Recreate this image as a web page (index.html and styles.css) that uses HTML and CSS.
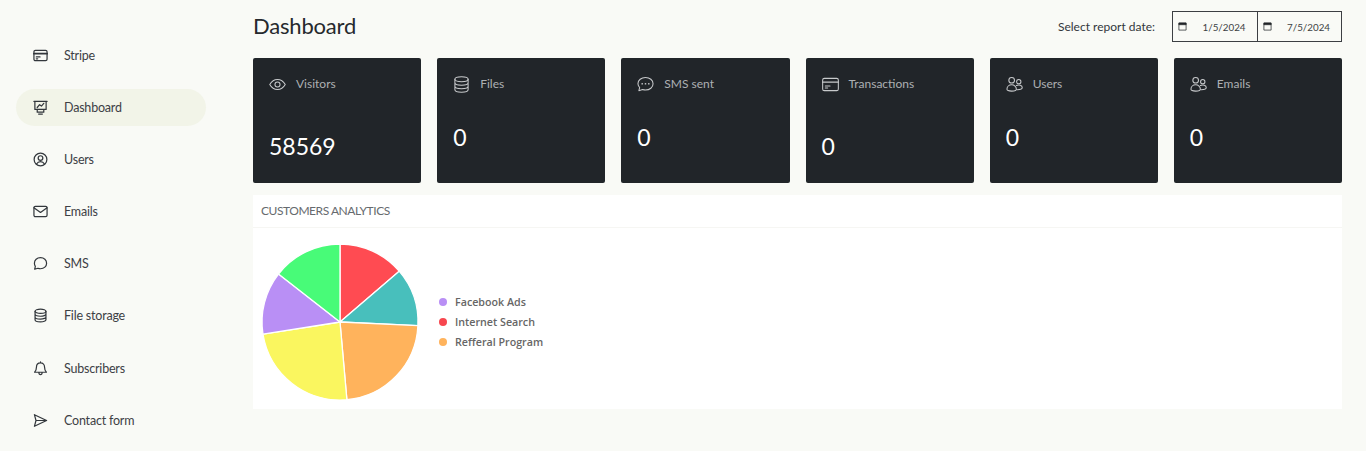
FILE: index.html
```html
<!DOCTYPE html>
<html lang="en">
<head>
<meta charset="utf-8">
<title>Dashboard</title>
<link rel="stylesheet" href="styles.css">
</head>
<body>
<div class="app">
  <nav class="sidebar">
    <a class="nav-item"><svg class="nav-icon" viewBox="0 0 16 16"><rect x="1" y="2.500" width="14" height="11" rx="1.500"/><path d="M1 6h14" stroke-width="2"/><path d="M3.500 9.500h4M3.500 11.500h1.500"/></svg><span>Stripe</span></a>
    <a class="nav-item active"><svg class="nav-icon" viewBox="0 0 16 16"><path d="M1 1.500h14M2 1.500v8.500h12V1.500M4.500 10v3h7v-3M6 15h4M4.500 8l2.500-3 2 1.500 2.500-3"/></svg><span>Dashboard</span></a>
    <a class="nav-item"><svg class="nav-icon" viewBox="0 0 16 16"><circle cx="8" cy="8" r="6.800"/><circle cx="8" cy="6.500" r="2.500"/><path d="M3.800 12.800c1-1.800 2.500-2.500 4.200-2.500s3.200.7 4.200 2.500"/></svg><span>Users</span></a>
    <a class="nav-item"><svg class="nav-icon" viewBox="0 0 16 16"><rect x="1" y="2.500" width="14" height="11" rx="1.500"/><path d="M1 4l7 5 7-5"/></svg><span>Emails</span></a>
    <a class="nav-item"><svg class="nav-icon" viewBox="0 0 16 16"><path d="M8 1.800c3.800 0 6.500 2.600 6.500 5.900s-2.700 5.900-6.500 5.900c-1 0-2-.2-2.800-.5l-3.400 1 .7-3C1.900 10.200 1.500 9 1.500 7.700 1.500 4.400 4.200 1.800 8 1.800z"/></svg><span>SMS</span></a>
    <a class="nav-item"><svg class="nav-icon" viewBox="0 0 16 16"><ellipse cx="8" cy="3.500" rx="5.800" ry="2.300"/><path d="M2.200 3.500v9c0 1.300 2.600 2.300 5.800 2.300s5.800-1 5.800-2.300v-9M2.200 6.500c0 1.300 2.600 2.300 5.800 2.300s5.800-1 5.800-2.300M2.200 9.500c0 1.300 2.600 2.300 5.800 2.300s5.800-1 5.800-2.300"/></svg><span>File storage</span></a>
    <a class="nav-item"><svg class="nav-icon" viewBox="0 0 16 16"><path d="M8 2c-2.700 0-4.300 2-4.300 4.500 0 3-1 4.500-2 5.500h12.600c-1-1-2-2.500-2-5.500C12.300 4 10.700 2 8 2zM8 .8V2M6.300 12.200c0 1.300.8 2.300 1.700 2.300s1.700-1 1.700-2.300"/></svg><span>Subscribers</span></a>
    <a class="nav-item"><svg class="nav-icon" viewBox="0 0 16 16"><path d="M1.500 1.800l13 6.200-13 6.200L3.200 8zM3.200 8h11.300"/></svg><span>Contact form</span></a>
  </nav>

  <main class="content">
    <header class="topbar">
      <h1 class="title">Dashboard</h1>
      <div class="date-picker">
        <span class="date-label">Select report date:</span>
        <div class="date-range">
          <div class="date-field"><svg class="cal" viewBox="0 0 10 10"><path d="M1 1.500h8v7.500H1z"/><path class="cal-top" d="M1 1h8v2H1z"/></svg><span>1/5/2024</span></div>
          <div class="date-field"><svg class="cal" viewBox="0 0 10 10"><path d="M1 1.500h8v7.500H1z"/><path class="cal-top" d="M1 1h8v2H1z"/></svg><span>7/5/2024</span></div>
        </div>
      </div>
    </header>

    <section class="cards">
      <article class="card">
        <div class="card-head"><svg class="card-icon" viewBox="0 0 18 18"><path d="M.8 9C2.800 5.500 5.600 3.700 9 3.700s6.200 1.800 8.200 5.300c-2 3.500-4.800 5.300-8.200 5.300S2.800 12.500.8 9z"/><circle cx="9" cy="9" r="2.700"/></svg><span>Visitors</span></div>
        <div class="card-value low">58569</div>
      </article>
      <article class="card">
        <div class="card-head"><svg class="card-icon" viewBox="0 0 18 18"><ellipse cx="9" cy="3.500" rx="7" ry="2.600"/><path d="M2 3.500v11c0 1.500 3.100 2.600 7 2.600s7-1.100 7-2.600v-11M2 7.200c0 1.500 3.100 2.600 7 2.600s7-1.100 7-2.600M2 10.900c0 1.500 3.100 2.600 7 2.600s7-1.100 7-2.600"/></svg><span>Files</span></div>
        <div class="card-value">0</div>
      </article>
      <article class="card">
        <div class="card-head"><svg class="card-icon" viewBox="0 0 18 18"><path d="M9 1.500c4.500 0 8 2.900 8 6.700s-3.500 6.700-8 6.700c-1.100 0-2.200-.2-3.100-.5l-3.900 1.100.8-3.300C1.800 11 1 9.700 1 8.200 1 4.400 4.500 1.500 9 1.500z"/><path class="dots" d="M5.500 8.200h.01M9 8.200h.01M12.500 8.200h.01"/></svg><span>SMS sent</span></div>
        <div class="card-value">0</div>
      </article>
      <article class="card">
        <div class="card-head"><svg class="card-icon" viewBox="0 0 18 18"><rect x=".7" y="2.500" width="16.600" height="13" rx="1.800"/><path d="M.7 6.500h16.600" stroke-width="1.500"/><path d="M3.500 10.500h5M3.500 12.700h2.500"/></svg><span>Transactions</span></div>
        <div class="card-value low">0</div>
      </article>
      <article class="card">
        <div class="card-head"><svg class="card-icon" viewBox="0 0 18 18"><circle cx="6" cy="4.500" r="3"/><circle cx="13.500" cy="6" r="2.300"/><path d="M1 14c0-2.800 2.200-4.700 5-4.700s5 1.900 5 4.700c0 1.200-1.500 2-5 2s-5-.8-5-2zM11 10c2.800-1.200 6.200-.4 6.200 2.200 0 1.500-1.500 2.300-5.200 2.300"/></svg><span>Users</span></div>
        <div class="card-value">0</div>
      </article>
      <article class="card">
        <div class="card-head"><svg class="card-icon" viewBox="0 0 18 18"><circle cx="6" cy="4.500" r="3"/><circle cx="13.500" cy="6" r="2.300"/><path d="M1 14c0-2.800 2.200-4.700 5-4.700s5 1.900 5 4.700c0 1.200-1.500 2-5 2s-5-.8-5-2zM11 10c2.800-1.200 6.200-.4 6.200 2.200 0 1.500-1.500 2.300-5.200 2.300"/></svg><span>Emails</span></div>
        <div class="card-value">0</div>
      </article>
    </section>

    <section class="panel">
      <h2 class="panel-title">CUSTOMERS ANALYTICS</h2>
      <div class="chart">
        <svg class="pie" viewBox="0 0 156 156">
          <path fill="#ff4b52" d="M78 78V0A78 78 0 0 1 137.200 27.200z"/>
          <path fill="#48bfbc" d="M78 78L137.200 27.200A78 78 0 0 1 155.900 81.700z"/>
          <path fill="#ffb35c" d="M78 78L155.900 81.700A78 78 0 0 1 84.900 155.700z"/>
          <path fill="#faf65f" d="M78 78L84.900 155.700A78 78 0 0 1 .96 90.200z"/>
          <path fill="#b98ff5" d="M78 78L.96 90.200A78 78 0 0 1 16.500 30z"/>
          <path fill="#48fb78" d="M78 78L16.500 30A78 78 0 0 1 78 0z"/>
        </svg>
        <ul class="legend">
          <li><i class="dot purple"></i>Facebook Ads</li>
          <li><i class="dot red"></i>Internet Search</li>
          <li><i class="dot orange"></i>Refferal Program</li>
        </ul>
      </div>
    </section>
  </main>
</div>
</body>
</html>
```
FILE: styles.css
```css
* { box-sizing: border-box; }
html, body { height: 100%; }
body {
  margin: 0;
  background: #f9faf6;
  color: #212529;
  font-family: "Lato", "Liberation Sans", sans-serif;
  overflow: hidden;
}
.app { display: flex; height: 451px; }

.sidebar {
  width: 253px;
  flex: none;
  padding: 36.500px 47px 0 16px;
  display: flex;
  flex-direction: column;
  gap: 15.200px;
}
.nav-item {
  height: 37px;
  border-radius: 19px;
  display: flex;
  align-items: center;
  gap: 16px;
  padding-left: 17px;
  font-size: 12.500px;
  letter-spacing: -.2px;
  color: #3d4045;
}
.nav-item.active { background: #f2f4e8; }
.nav-icon {
  width: 15px;
  height: 15px;
  fill: none;
  stroke: #33373c;
  stroke-width: 1.300;
  stroke-linejoin: round;
  stroke-linecap: round;
  overflow: visible;
}

.content { flex: 1; padding: 0 24px 0 0; min-width: 0; }

.topbar {
  height: 58px;
  display: flex;
  justify-content: space-between;
  align-items: flex-start;
  padding-top: 11px;
}
.title {
  margin: -1px 0 0;
  font-size: 22px;
  font-weight: 400;
  letter-spacing: -.2px;
  line-height: 31px;
  color: #26292d;
}
.date-picker { display: flex; align-items: center; gap: 17px; }
.date-label { font-size: 12px; color: #33373c; }
.date-range {
  display: flex;
  width: 170px;
  height: 31px;
  border: 1px solid #3c3f43;
}
.date-field {
  flex: 1;
  display: flex;
  align-items: center;
  justify-content: space-between;
  padding: 0 11px 0 5px;
  font-size: 9.800px;
  color: #3c3f43;
}
.date-field + .date-field { border-left: 1px solid #3c3f43; }
.cal { width: 9px; height: 9px; fill: none; stroke: #212529; stroke-width: .8; }
.cal-top { fill: #212529; }

.cards {
  display: grid;
  grid-template-columns: repeat(6, 1fr);
  gap: 16px;
}
.card {
  height: 125px;
  background: #212529;
  border-radius: 2px;
  padding: 17px 16px 0;
  color: #fff;
}
.card-head {
  display: flex;
  align-items: center;
  gap: 10px;
  height: 18px;
  font-size: 12px;
  color: #adb0b3;
}
.card-head span { padding-bottom: 2px; }
.card-icon {
  width: 17px;
  height: 17px;
  fill: none;
  stroke: #c8cacc;
  stroke-width: 1.100;
  stroke-linecap: round;
  stroke-linejoin: round;
  overflow: visible;
}
.dots { stroke-width: 1.800; }
.card-value {
  margin-top: 29px;
  font-size: 23px;
  line-height: 30px;
  font-weight: 400;
}
.card-value.low { margin-top: 38px; }

.panel {
  margin-top: 12px;
  height: 214px;
  background: #fff;
}
.panel-title {
  margin: 0;
  height: 33px;
  padding: 0 8px 2px;
  display: flex;
  align-items: center;
  font-size: 12px;
  font-weight: 400;
  letter-spacing: -.45px;
  color: #666a6e;
  border-bottom: 1px solid #f6f6f3;
}
.chart {
  display: flex;
  align-items: center;
  padding: 16px 0 0 9px;
  gap: 21px;
}
.pie {
  width: 156px;
  height: 156px;
  flex: none;
  overflow: visible;
}
.pie path { stroke: #fff; stroke-width: 1.300; stroke-linejoin: round; }
.legend {
  list-style: none;
  margin: 0;
  padding: 0;
  display: flex;
  flex-direction: column;
  gap: 5px;
  font-family: "Open Sans", "Noto Sans", sans-serif;
  font-size: 10.700px;
  font-weight: 600;
  line-height: 15px;
  color: #666;
}
.legend li { display: flex; align-items: center; gap: 8px; }
.dot { width: 8px; height: 8px; border-radius: 50%; flex: none; }
.purple { background: #b98ff5; }
.red { background: #f7474f; }
.orange { background: #ffb35c; }
```
